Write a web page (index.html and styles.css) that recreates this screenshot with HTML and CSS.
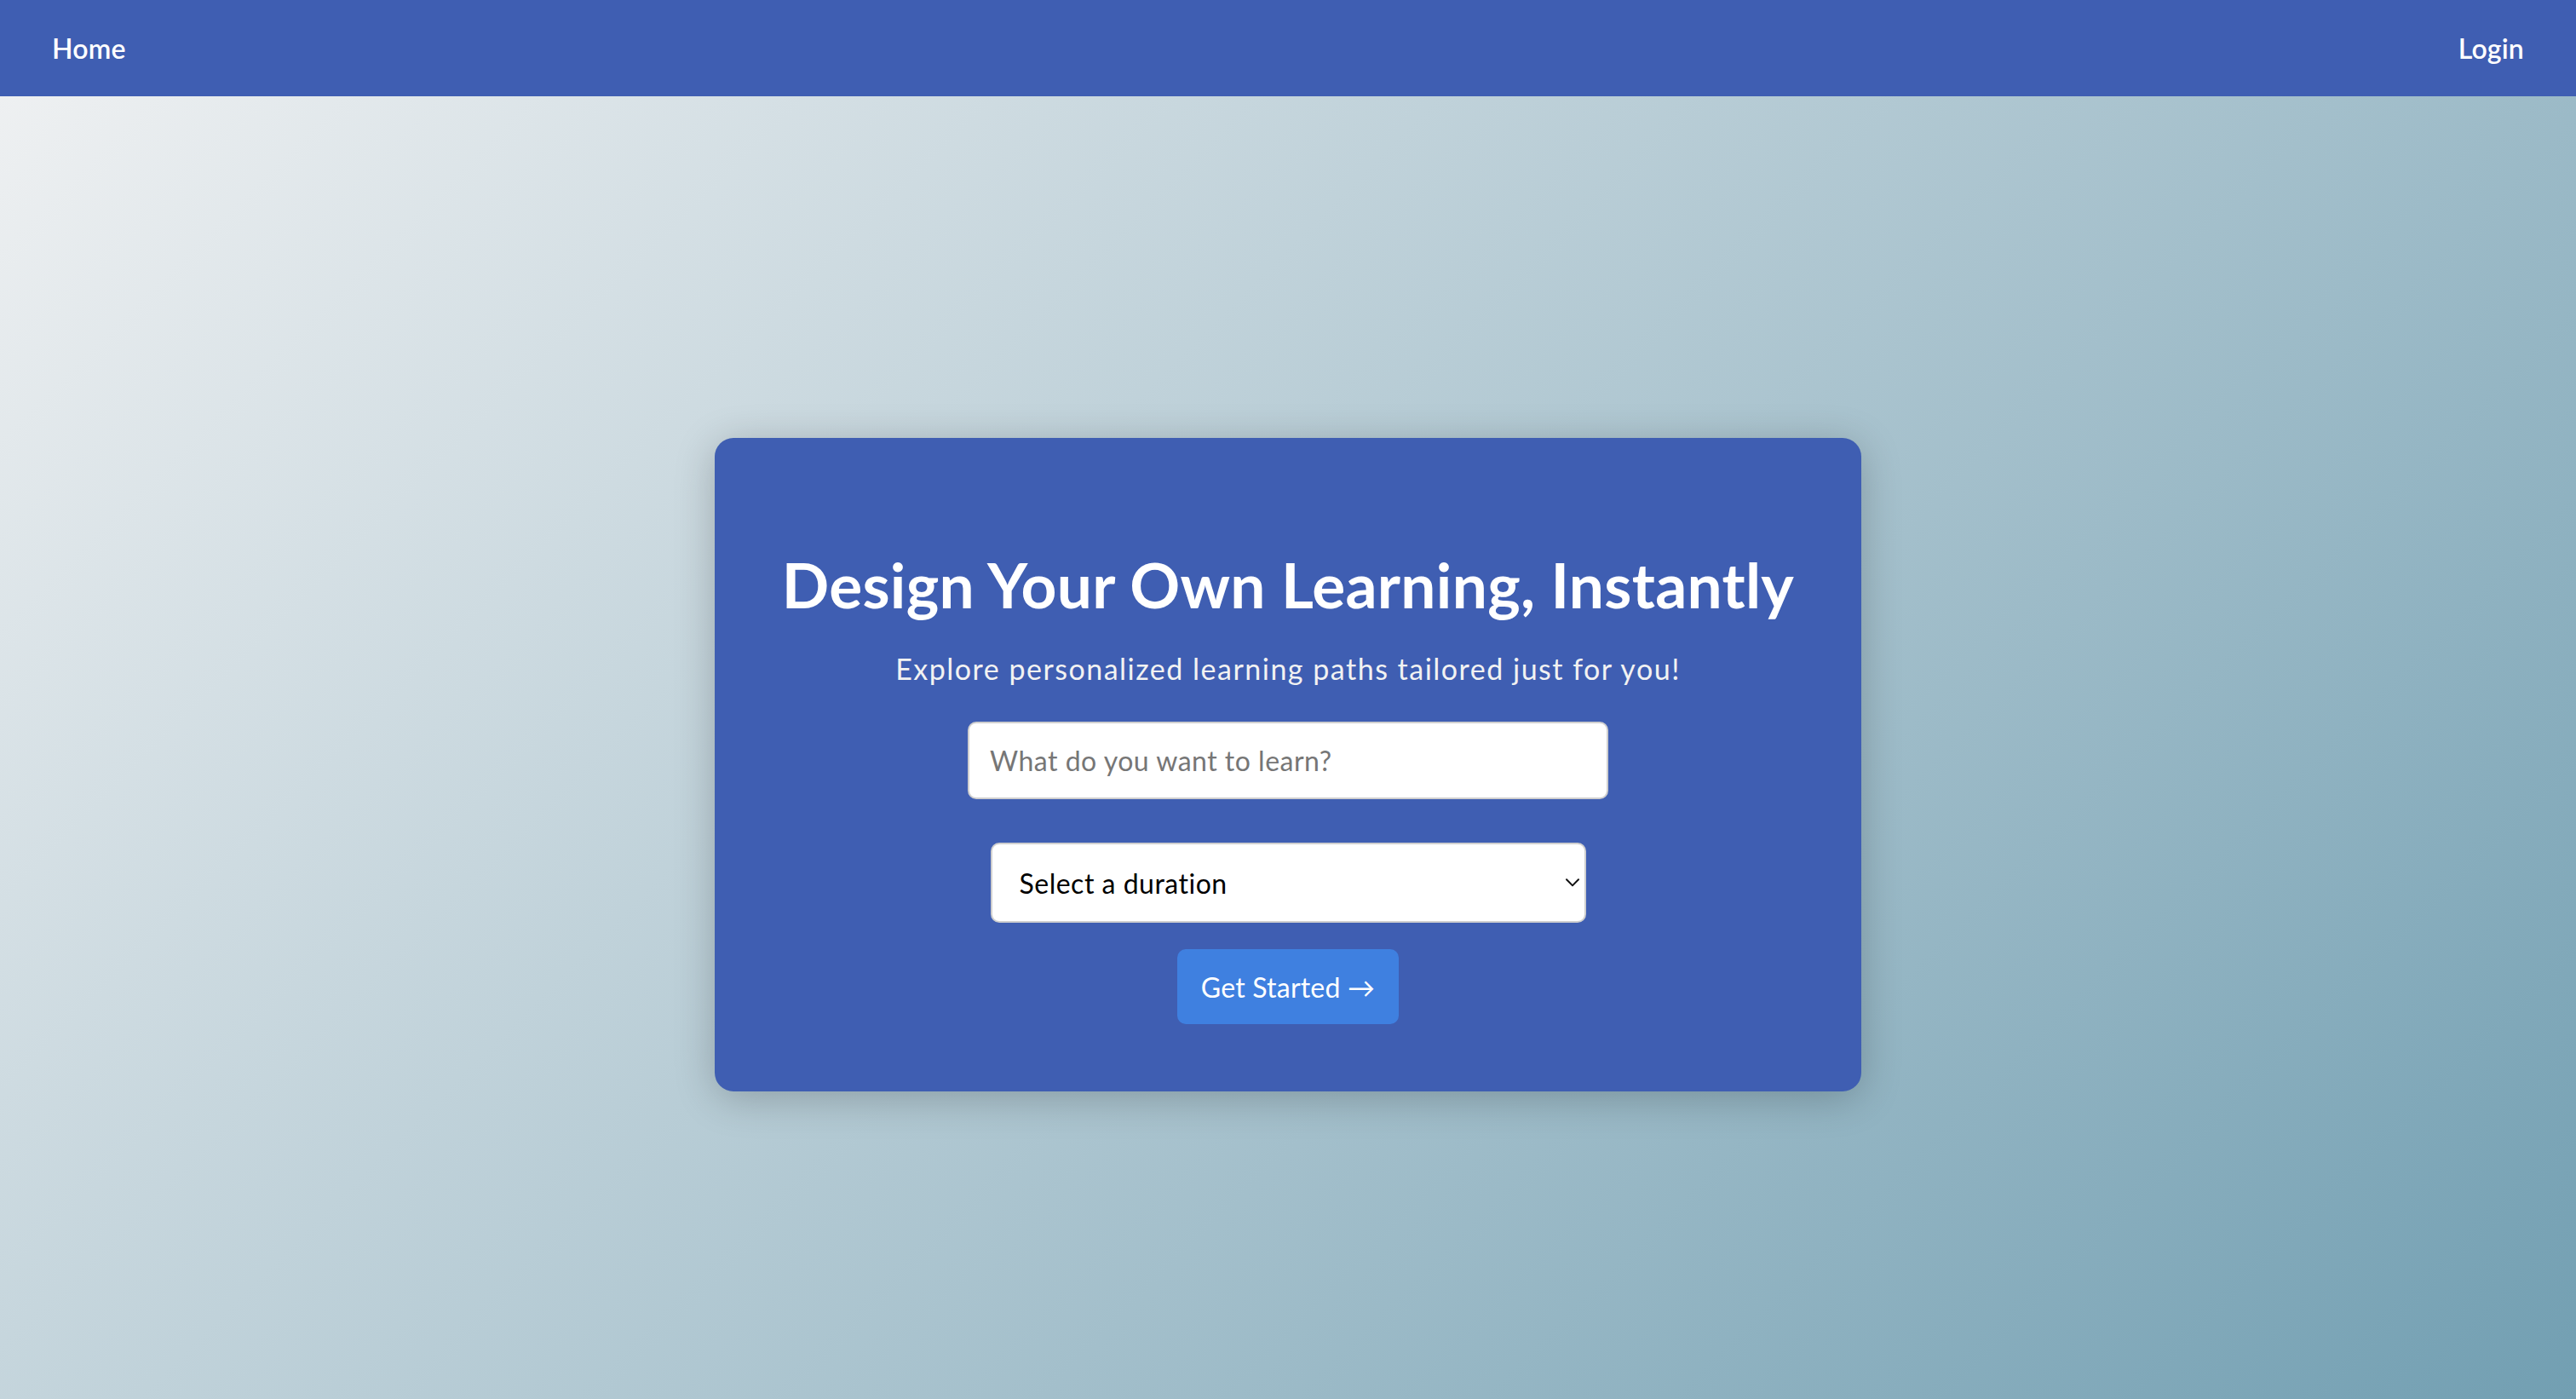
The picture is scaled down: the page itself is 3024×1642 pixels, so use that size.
FILE: index.html
```html
<!DOCTYPE html>
<html lang="en">
<head>
<meta charset="utf-8">
<title>Design Your Own Learning</title>
<link rel="stylesheet" href="styles.css">
</head>
<body>
  <nav class="navbar">
    <a class="nav-link" href="#">Home</a>
    <a class="nav-link" href="#">Login</a>
  </nav>
  <main class="hero">
    <section class="card">
      <h1 class="card-title">Design Your Own Learning, Instantly</h1>
      <p class="card-subtitle">Explore personalized learning paths tailored just for you!</p>
      <input class="topic-input" type="text" placeholder="What do you want to learn?">
      <div class="select-wrap">
        <select class="duration-select">
          <option>Select a duration</option>
          <option>1 week</option>
          <option>1 month</option>
          <option>3 months</option>
        </select>
        <svg class="chevron" width="16" height="10" viewBox="0 0 16 10" aria-hidden="true"><path d="M1 1.2 L8 8.4 L15 1.2" fill="none" stroke="#111" stroke-width="2" stroke-linecap="round" stroke-linejoin="round"/></svg>
      </div>
      <button class="start-btn" type="button">Get Started →</button>
    </section>
  </main>
</body>
</html>
```
FILE: styles.css
```css
* { box-sizing: border-box; }

html, body { margin: 0; padding: 0; }

body {
  min-height: 100vh;
  font-family: "Lato", "Noto Sans", sans-serif;
  background: linear-gradient(135deg, #f1f2f3 0%, #729fb2 100%);
  background-attachment: fixed;
}

.navbar {
  height: 113px;
  padding: 0 61px;
  background: #3f5eb2;
  display: flex;
  align-items: center;
  justify-content: space-between;
}

.nav-link {
  color: #ffffff;
  text-decoration: none;
  font-size: 32px;
  font-weight: 600;
  letter-spacing: 0.2px;
}

.hero {
  min-height: calc(100vh - 113px);
  padding-top: 40px;
  display: flex;
  align-items: center;
  justify-content: center;
}

.card {
  width: 1346px;
  height: 767px;
  padding: 130px 40px 79px;
  background: #3f5eb2;
  border-radius: 22px;
  box-shadow: 0 8px 48px rgba(0, 0, 0, 0.22);
  display: flex;
  flex-direction: column;
  align-items: center;
}

.card-title {
  margin: 0 0 36px;
  font-size: 73px;
  line-height: 84px;
  font-weight: 700;
  letter-spacing: 0.3px;
  color: #ffffff;
  white-space: nowrap;
}

.card-subtitle {
  margin: 0 0 42px;
  font-size: 34px;
  line-height: 41px;
  letter-spacing: 1.5px;
  color: #f2f2f2;
  white-space: nowrap;
}

.topic-input {
  width: 752px;
  height: 91px;
  margin: 0 0 51px;
  padding: 0 24px;
  border: 2px solid #cfcfcf;
  border-radius: 10px;
  background: #ffffff;
  font-family: inherit;
  font-size: 32px;
  letter-spacing: 0.5px;
  color: #222;
  outline: none;
}

.topic-input::placeholder { color: #767676; }

.select-wrap {
  position: relative;
  width: 699px;
  height: 94px;
  margin: 0 0 31px;
}

.duration-select {
  width: 100%;
  height: 100%;
  padding: 0 32px;
  border: 2px solid #cfcfcf;
  border-radius: 10px;
  background: #ffffff;
  font-family: inherit;
  font-size: 32px;
  letter-spacing: 0.5px;
  color: #000;
  appearance: none;
  -webkit-appearance: none;
  outline: none;
}

.chevron {
  position: absolute;
  right: 8px;
  top: 42px;
}

.start-btn {
  width: 260px;
  height: 88px;
  border: none;
  border-radius: 10px;
  background: #3f80e0;
  color: #ffffff;
  font-family: inherit;
  font-size: 32px;
  letter-spacing: 0.2px;
  cursor: pointer;
}
```
